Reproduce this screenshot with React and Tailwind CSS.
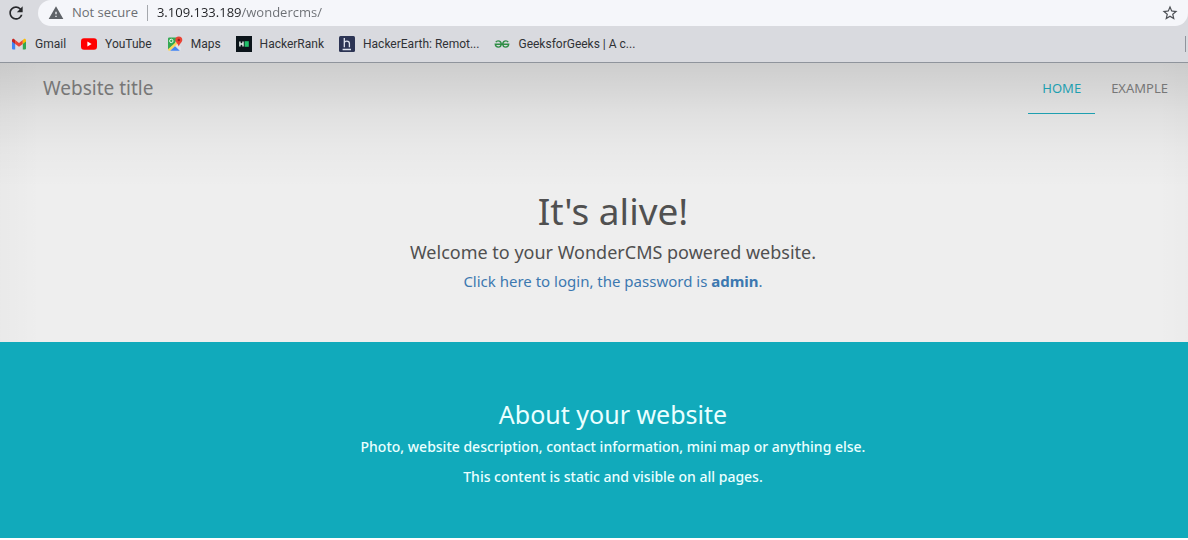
import React from "react";
import { MdRefresh, MdWarning, MdStarBorder } from "react-icons/md";

function GmailIcon() {
  return (
    <svg viewBox="0 0 16 16" className="size-4" aria-hidden="true">
      <path d="M1 4.2V12.6a.8.8 0 0 0 .8.8H4.2V7.2z" fill="#4285f4" />
      <path d="M15 4.2V12.6a.8.8 0 0 1-.8.8H11.8V7.2z" fill="#34a853" />
      <path d="M4.2 4v3.9L8 10.7l3.8-2.8V4L8 6.9z" fill="#ea4335" />
      <path d="M1 4.2v1.4l3.200 2.400V4l-.9-.8C2.400 2.400 1 3.100 1 4.200z" fill="#c5221f" />
      <path d="M15 4.200v1.400l-3.200 2.400V4l.9-.8C13.600 2.400 15 3.100 15 4.200z" fill="#fbbc04" />
    </svg>
  );
}

function YouTubeIcon() {
  return (
    <svg viewBox="0 0 16 16" className="size-4" aria-hidden="true">
      <rect x="0" y="2.300" width="16" height="11.400" rx="3" fill="#f00" />
      <path d="M6.400 5.600v4.800l4.200-2.400z" fill="#fff" />
    </svg>
  );
}

function MapsIcon() {
  return (
    <svg viewBox="0 0 16 16" className="size-4" aria-hidden="true">
      <path d="M2.200 1.500H10L7.800 8 1 14V2.700a1.200 1.200 0 0 1 1.200-1.200z" fill="#34a853" />
      <path d="M1 13.200L9 6l1.700 1.700L3.200 14.800H2.200A1.200 1.200 0 0 1 1 13.600z" fill="#fbd75b" />
      <path d="M3.200 14.800L8 10.200l4.800 4.600z" fill="#4285f4" />
      <path d="M8.500 9.700l2-2 3.500 3.500v2.400a1.200 1.200 0 0 1-.8 1.100z" fill="#dfe3e8" />
      <circle cx="4.300" cy="4.900" r="1.700" fill="none" stroke="#fff" strokeWidth=".9" />
      <path d="M11.800.5a3.500 3.500 0 0 0-3.500 3.500c0 2.500 2.700 3.200 3.500 6.500.8-3.300 3.500-4 3.500-6.500A3.500 3.500 0 0 0 11.800.5z" fill="#ea4335" />
      <circle cx="11.800" cy="4" r="1.200" fill="#9c1f16" />
    </svg>
  );
}

function HackerRankIcon() {
  return (
    <svg viewBox="0 0 16 16" className="size-4" aria-hidden="true">
      <rect width="16" height="16" fill="#0b141a" />
      <path d="M3.900 5.500v5M7 5.500v5M3.900 8H7" stroke="#e8f3ef" strokeWidth="1.400" fill="none" />
      <rect x="8.600" y="5.200" width="4.200" height="5.600" fill="#21c06a" />
    </svg>
  );
}

function HackerEarthIcon() {
  return (
    <svg viewBox="0 0 16 16" className="size-4" aria-hidden="true">
      <rect width="16" height="16" rx="1.500" fill="#2c3454" />
      <path d="M5.300 2v9.300M5.300 7.200c0-1.300 1-2.100 2.500-2.100s2.600.8 2.600 2.300v3.900M3.600 13.500h8.400" stroke="#dfe3ee" strokeWidth="1.300" fill="none" />
    </svg>
  );
}

function GeeksIcon() {
  return (
    <svg viewBox="0 0 16 16" className="size-4" fill="none" stroke="#2f8d46" strokeWidth="1.400" aria-hidden="true">
      <path d="M1.800 6.200C2.600 5 4 4.700 5.300 5.100 6.700 5.600 7.300 6.800 7.200 8.200 7.100 10 5.900 11.100 4.300 11.100 2.600 11.100 1.400 10 1.300 8.300H14.700C14.600 10 13.400 11.100 11.700 11.100 10.100 11.100 8.900 10 8.800 8.200 8.700 6.800 9.300 5.600 10.700 5.100 12 4.700 13.400 5 14.200 6.200" />
    </svg>
  );
}

const bookmarks = [
  { label: "Gmail", Icon: GmailIcon },
  { label: "YouTube", Icon: YouTubeIcon },
  { label: "Maps", Icon: MapsIcon },
  { label: "HackerRank", Icon: HackerRankIcon },
  { label: "HackerEarth: Remot...", Icon: HackerEarthIcon },
  { label: "GeeksforGeeks | A c...", Icon: GeeksIcon },
];

function BrowserBar() {
  return (
    <div className="border-b border-[#8f949c] bg-[#d9dadf] font-['Open_Sans',sans-serif]">
      <div className="flex h-[26px]">
        <button aria-label="Reload" className="flex w-[38px] items-center pl-[6px] text-[#27282b]">
          <MdRefresh className="size-5" />
        </button>
        <div className="flex min-w-0 flex-1 items-center rounded-l-[13px] rounded-br-[13px] bg-[#f5f6fa] pr-[9px] pl-[10px] text-[13px]">
          <MdWarning className="size-4 shrink-0 text-[#5f6368]" />
          <span className="ml-2 whitespace-nowrap text-[#6b6e73]">Not secure</span>
          <span className="mr-[9px] ml-[9px] h-4 w-px bg-[#a5a8ad]" />
          <input
            aria-label="Address"
            defaultValue="3.109.133.189/wondercms/"
            className="min-w-0 flex-1 bg-[linear-gradient(to_right,#202124_84px,#6b6e73_84px)] bg-clip-text text-transparent outline-none"
          />
          <button aria-label="Bookmark this page" className="text-[#4b4e53]">
            <MdStarBorder className="size-[18px]" />
          </button>
        </div>
      </div>
      <div className="flex h-9 items-center justify-between pl-[11px]">
        <nav aria-label="Bookmarks" className="flex gap-[15px] font-['Roboto',sans-serif] text-[12px] text-[#303236]">
          {bookmarks.map(({ label, Icon }) => (
            <a key={label} href="#" className="flex items-center gap-2 whitespace-nowrap">
              <Icon />
              {label}
            </a>
          ))}
        </nav>
        <span className="mr-[2px] h-4 w-px bg-[#8f949c]" />
      </div>
    </div>
  );
}

export default function App() {
  return (
    <div className="min-h-screen bg-white font-['Noto_Sans',sans-serif]">
      <BrowserBar />
      <div className="bg-[#eee] bg-[linear-gradient(to_bottom,#00000023,#0000001a_24px,#0000000f_50px,#00000006_84px,transparent_125px),linear-gradient(to_right,#00000005,transparent_40px),linear-gradient(to_left,#00000003,transparent_30px)] pb-[46px]">
        <header className="flex items-start justify-between pr-1 pb-px pl-[43px]">
          <a href="#" className="text-[19px] leading-[50px] text-[#777]">Website title</a>
          <nav aria-label="Main" className="flex text-[13px] leading-[50px] text-[#777]">
            <a href="#" className="px-[14px] text-[#1e9fb0] shadow-[0_1px_0_#1e9fb0]">HOME</a>
            <a href="#" className="px-4">EXAMPLE</a>
          </nav>
        </header>
        <main className="pt-[70px] pl-[38px] text-center text-[#505050]">
          <h1 className="text-[37px] leading-[54px]">It's alive!</h1>
          <h2 className="text-[18px] leading-[28px]">Welcome to your WonderCMS powered website.</h2>
          <p className="text-[15px] leading-[30px] text-[#3c78b0]">
            <a href="#">Click here to login, the password is <b>admin</b>.</a>
          </p>
        </main>
      </div>
      <section className="bg-[#1ab] pt-[54px] pb-[46px] pl-[38px] text-center text-[#eaffff]">
        <h2 className="text-[25px] leading-9">About your website</h2>
        <p className="text-[14px] leading-[30px] font-medium">Photo, website description, contact information, mini map or anything else.</p>
        <p className="text-[14px] leading-[30px] font-medium">This content is static and visible on all pages.</p>
      </section>
    </div>
  );
}
